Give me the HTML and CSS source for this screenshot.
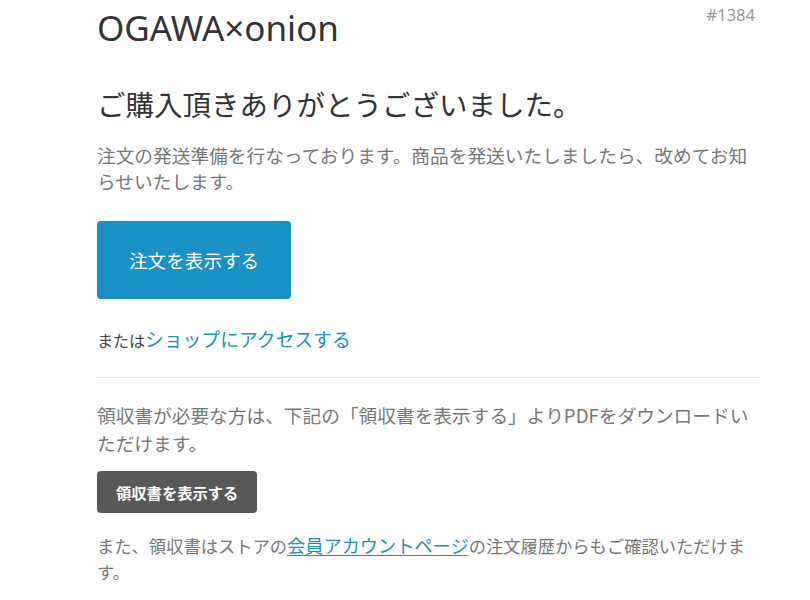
FILE: index.html
```html
<!DOCTYPE html>
<html lang="ja">
<head>
<meta charset="utf-8">
<title>ご購入頂きありがとうございました。</title>
<link rel="stylesheet" href="styles.css">
</head>
<body>
<div class="container">
  <div class="header">
    <div class="shop-name">OGAWA×onion</div>
    <div class="order-number">#1384</div>
  </div>
  <h2 class="heading">ご購入頂きありがとうございました。</h2>
  <p class="lead">注文の発送準備を行なっております。商品を発送いたしましたら、改めてお知らせいたします。</p>
  <div class="actions">
    <a class="button" href="#">注文を表示する</a>
  </div>
  <div class="secondary"><span class="or">または</span><a class="shop-link" href="#">ショップにアクセスする</a></div>
  <hr class="divider">
  <p class="receipt-text">領収書が必要な方は、下記の「領収書を表示する」よりPDFをダウンロードいただけます。</p>
  <a class="button-dark" href="#">領収書を表示する</a>
  <p class="note">また、領収書はストアの<a class="account-link" href="#">会員アカウントページ</a>の注文履歴からもご確認いただけます。</p>
</div>
</body>
</html>
```
FILE: styles.css
```css
html, body {
  margin: 0;
  padding: 0;
  background: #ffffff;
}
body {
  font-family: "Noto Sans", "Noto Sans CJK JP", sans-serif;
  color: #333333;
}
.container {
  width: 663px;
  margin-left: 97px;
  padding-top: 7px;
}
.header {
  display: flex;
  justify-content: space-between;
  align-items: flex-start;
}
.shop-name {
  font-size: 35px;
  line-height: 41px;
  color: #333333;
}
.order-number {
  font-size: 16.5px;
  line-height: 20px;
  color: #999999;
  margin-top: -2px;
  margin-right: 5px;
}
.heading {
  font-family: "Noto Sans CJK JP", sans-serif;
  font-weight: normal;
  font-size: 28.5px;
  line-height: 34px;
  margin: 39px 0 0;
  color: #333333;
}
.lead {
  font-family: "Noto Sans CJK JP", sans-serif;
  font-size: 18.7px;
  line-height: 26px;
  color: #777777;
  margin: 21px 0 0;
}
.actions {
  margin-top: 27px;
  display: flex;
}
.button {
  display: block;
  font-family: "Noto Sans CJK JP", sans-serif;
  background: #1990c6;
  color: #ffffff;
  text-decoration: none;
  font-size: 18.6px;
  line-height: 30px;
  padding: 24px 32px;
  border-radius: 4px;
  white-space: nowrap;
}
.secondary {
  font-family: "Noto Sans CJK JP", sans-serif;
  margin-top: 27px;
  line-height: 26px;
}
.or {
  font-size: 16px;
  color: #444444;
}
.shop-link {
  font-size: 18.8px;
  color: #1990c6;
  text-decoration: none;
}
.divider {
  border: 0;
  border-top: 1px solid #e8e8e8;
  margin: 24px 0 0;
}
.receipt-text {
  font-family: "Noto Sans CJK JP", sans-serif;
  font-size: 18.7px;
  line-height: 28px;
  color: #777777;
  margin: 23px 0 0;
}
.button-dark {
  display: inline-block;
  font-family: "Noto Sans CJK JP", sans-serif;
  margin-top: 14px;
  background: #585858;
  color: #ffffff;
  font-weight: bold;
  font-size: 15.3px;
  line-height: 42px;
  height: 42px;
  padding: 0 19px;
  border-radius: 4px;
  text-decoration: none;
  white-space: nowrap;
}
.note {
  font-family: "Noto Sans CJK JP", sans-serif;
  font-size: 17.3px;
  line-height: 26px;
  color: #777777;
  margin: 19px 0 0;
}
.account-link {
  font-size: 18.2px;
  color: #1990c6;
  text-decoration: underline;
  text-underline-offset: 2px;
}
```
